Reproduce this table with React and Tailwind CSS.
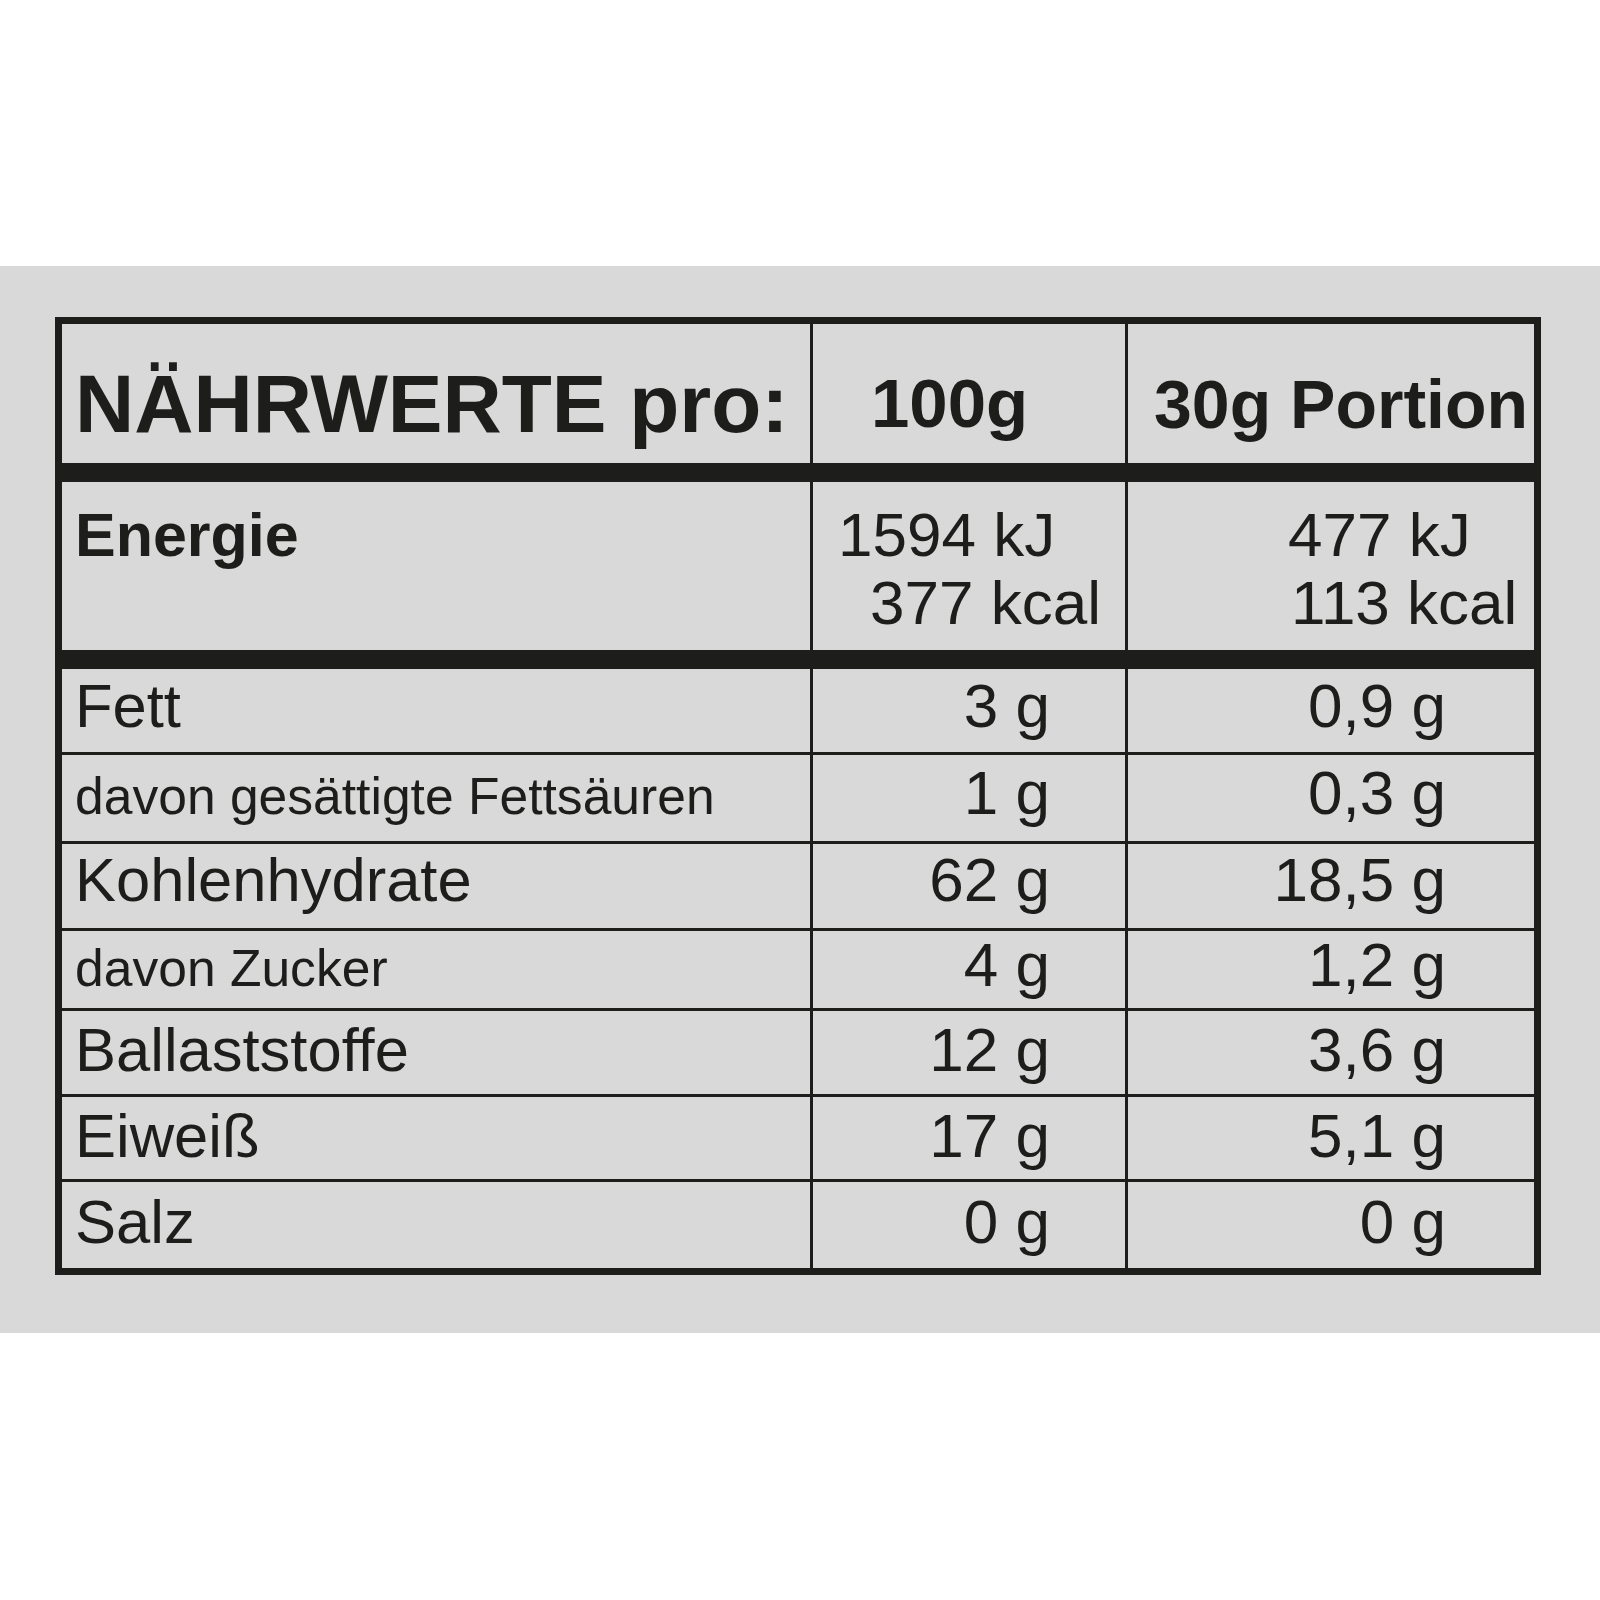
const rows = [
  { id: 1, label: "Fett", small: false, v1: "3 g", v2: "0,9 g", h: "h-[83px]", lpt: "pt-[6px]", vpt: "pt-[6px]" },
  { id: 2, label: "davon gesättigte Fettsäuren", small: true, v1: "1 g", v2: "0,3 g", h: "h-[86px]", lpt: "pt-[16px]", vpt: "pt-[7px]" },
  { id: 3, label: "Kohlenhydrate", small: false, v1: "62 g", v2: "18,5 g", h: "h-[84px]", lpt: "pt-[5px]", vpt: "pt-[5px]" },
  { id: 4, label: "davon Zucker", small: true, v1: "4 g", v2: "1,2 g", h: "h-[77px]", lpt: "pt-[12px]", vpt: "pt-[3px]" },
  { id: 5, label: "Ballaststoffe", small: false, v1: "12 g", v2: "3,6 g", h: "h-[83px]", lpt: "pt-[8px]", vpt: "pt-[8px]" },
  { id: 6, label: "Eiweiß", small: false, v1: "17 g", v2: "5,1 g", h: "h-[82px]", lpt: "pt-[8px]", vpt: "pt-[8px]" },
  { id: 7, label: "Salz", small: false, v1: "0 g", v2: "0 g", h: "h-[86px]", lpt: "pt-[9px]", vpt: "pt-[9px]" },
];

const cell = "bg-[#d9d9d9] leading-none whitespace-nowrap";

const App = () => {
  return (
    <div className="min-h-[1600px] bg-white pt-[266px] font-['Liberation_Sans',Arial,sans-serif] text-[#1d1d1b]">
      {/* grey band */}
      <div className="bg-[#d9d9d9] pt-[51px] pb-[58px] pl-[55px]">
        {/* table: dark background shows through gaps as rules */}
        <div className="flex w-[1486px] flex-col bg-[#1d1d1b] p-[7px]">
          {/* header */}
          <div className="grid h-[139px] grid-cols-[748px_312px_406px] gap-x-[3px]">
            <div className={`${cell} pl-[13px] pt-[39px] text-[82px] font-bold`}>NÄHRWERTE pro:</div>
            <div className={`${cell} pl-[58px] pt-[45px] text-[69px] font-bold`}>100g</div>
            <div className={`${cell} pl-[26px] pt-[46px] text-[68px] font-bold`}>30g Portion</div>
          </div>

          {/* energie */}
          <div className="mt-[19px] grid h-[168px] grid-cols-[748px_312px_406px] gap-x-[3px]">
            <div className={`${cell} pl-[13px] pt-[23px] text-[61px] font-bold`}>Energie</div>
            <div className={`${cell} pt-[22px] text-[62px]`}>
              <span className="block pl-[25px]">1594 kJ</span>
              <span className="mt-[6px] block pl-[57px]">377 kcal</span>
            </div>
            <div className={`${cell} pt-[22px] text-[62px]`}>
              <span className="block pl-[160px]">477 kJ</span>
              <span className="mt-[6px] block pl-[163px]">113 kcal</span>
            </div>
          </div>

          {/* nutrient rows */}
          {rows.map((row, i) => (
            <div
              key={row.id}
              className={`grid grid-cols-[748px_312px_406px] gap-x-[3px] ${row.h} ${i === 0 ? "mt-[19px]" : "mt-[3px]"}`}
            >
              <div className={`${cell} pl-[13px] ${row.lpt} ${row.small ? "text-[51.6px]" : "text-[61.5px]"}`}>
                {row.label}
              </div>
              <div className={`${cell} pr-[75px] text-right text-[62px] ${row.vpt}`}>{row.v1}</div>
              <div className={`${cell} pr-[88px] text-right text-[62px] ${row.vpt}`}>{row.v2}</div>
            </div>
          ))}
        </div>
      </div>
    </div>
  );
};

export default App;
